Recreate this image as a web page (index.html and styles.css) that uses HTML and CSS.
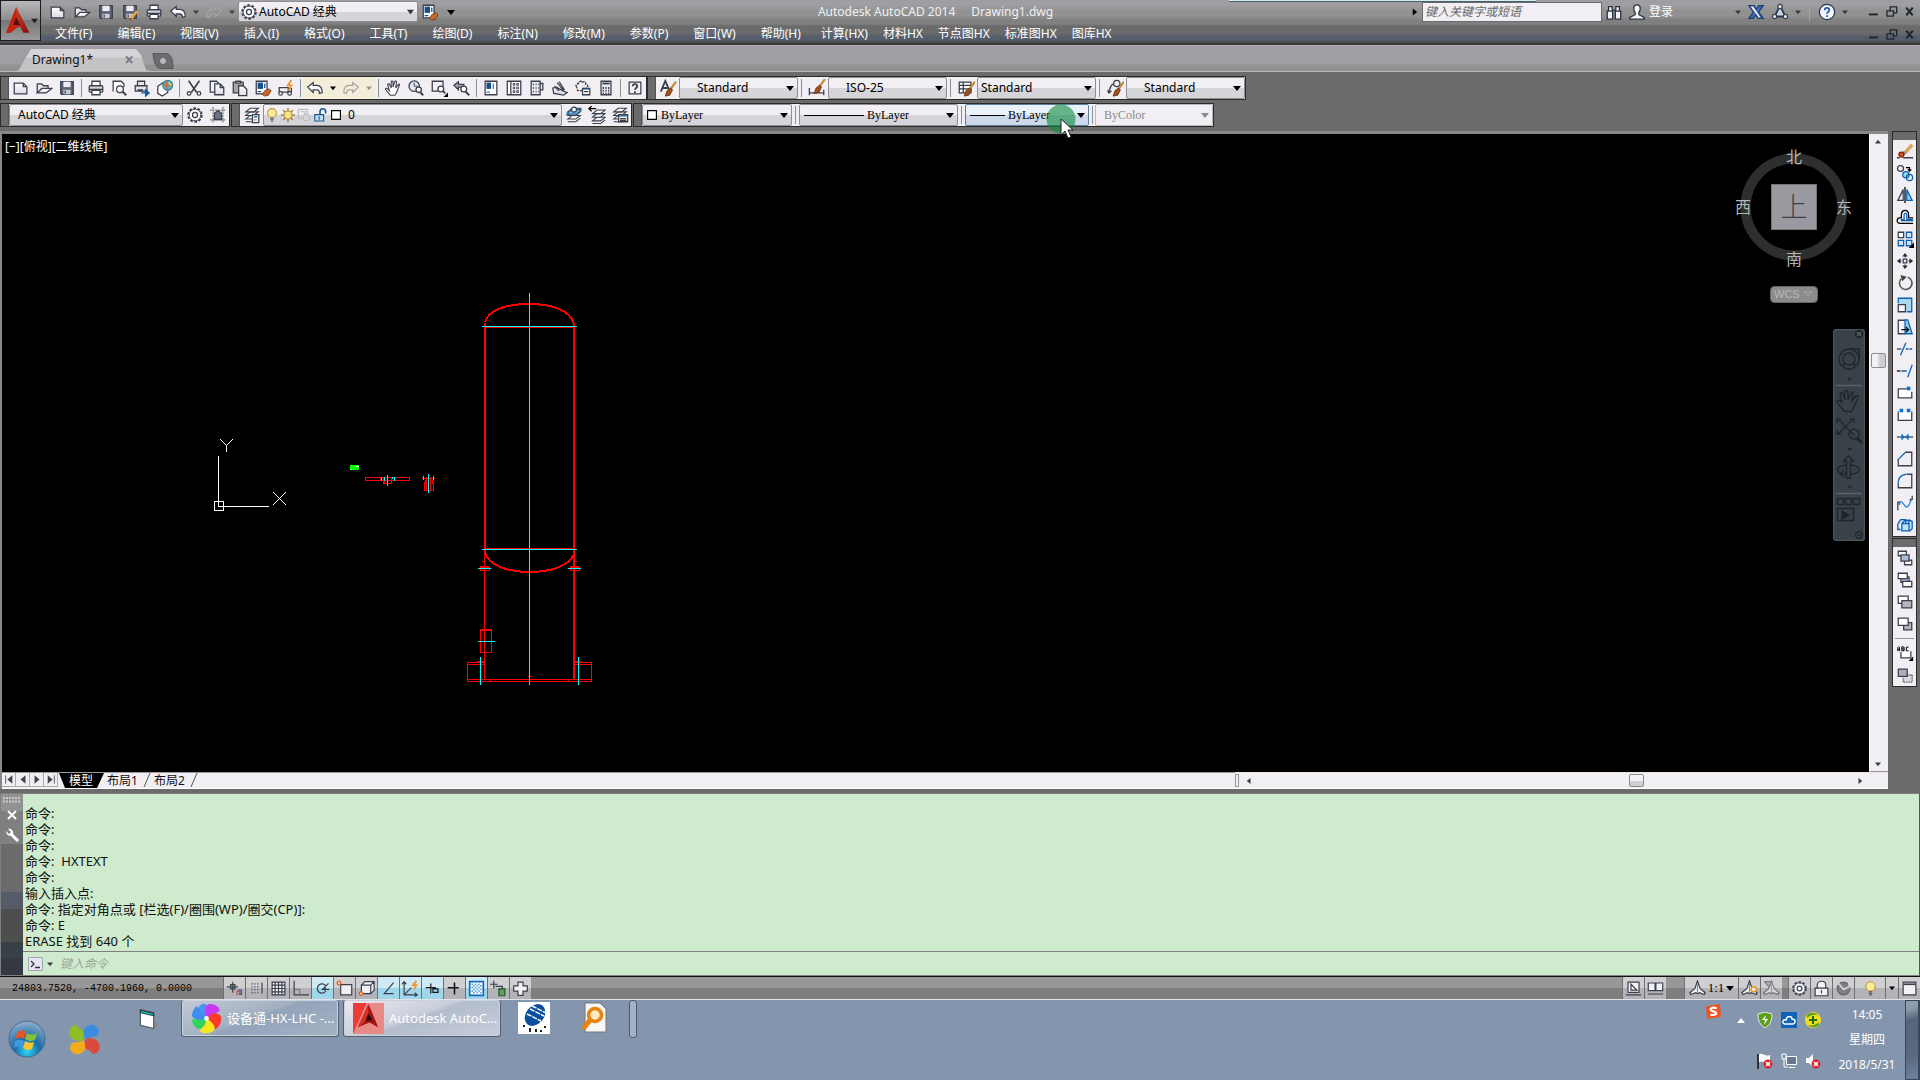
FILE: index.html
```
<!DOCTYPE html>
<html lang="zh-CN">
<head>
<meta charset="utf-8">
<title>Autodesk AutoCAD 2014 - Drawing1.dwg</title>
<link rel="stylesheet" href="styles.css">
</head>
<body>
<svg class="sprite" aria-hidden="true">
  <defs>
    <linearGradient id="gPage" x1="0" y1="0" x2="0" y2="1"><stop offset="0" stop-color="#fff"/><stop offset="1" stop-color="#dcdbe4"/></linearGradient>
    <linearGradient id="gRed" x1="0" y1="0" x2="1" y2="1"><stop offset="0" stop-color="#e8513a"/><stop offset="1" stop-color="#8c0f08"/></linearGradient>
    <radialGradient id="gOrb" cx=".5" cy=".85" r=".9"><stop offset="0" stop-color="#2fd8f4"/><stop offset=".4" stop-color="#1b6aa6"/><stop offset="1" stop-color="#9fb9d2"/></radialGradient>
  </defs>
  <symbol id="brush" viewBox="0 0 20 20"><path d="M19 3l-6 8" stroke="#c98a35" stroke-width="2.400"/><path d="M13 10l2 2-3 6-5 1 2-6z" fill="#a3521d" stroke="#6b3210" stroke-width="1"/></symbol>
  <symbol id="new" viewBox="0 0 20 20"><path d="M2.500 4.500h10l4 4v8h-14zM12.500 4.500v4h4" fill="url(#gPage)"/></symbol>
  <symbol id="open" viewBox="0 0 20 20"><path d="M2.500 15.500v-10h5l2 2h5v3" fill="#e8e8ee"/><path d="M2.500 15.500l5-5h11l-6 5z" fill="url(#gPage)"/></symbol>
  <symbol id="save" viewBox="0 0 20 20"><path d="M3 3h14v14H4l-1-1z" fill="#5b6474"/><path d="M6 3h8v6H6z" fill="#ececf2" stroke="none"/><path d="M6 12h8v5H6z" fill="#c9ccd6" stroke="none"/><path d="M8 13v3"/></symbol>
  <symbol id="saveas" viewBox="0 0 20 20"><use href="#save"/><path d="M18 9l-7 8" stroke="#e6a23c" stroke-width="3"/><path d="M11 17l-1 2" stroke="#b32"/></symbol>
  <symbol id="print" viewBox="0 0 20 20"><path d="M5.500 8V2.500h9V8" fill="#fff"/><rect x="2.500" y="7.500" width="15" height="7" rx="1" fill="#d5d4dc"/><path d="M2.500 11.500h15"/><path d="M5.500 12.500h9v5h-9z" fill="#fff"/></symbol>
  <symbol id="preview" viewBox="0 0 20 20"><path d="M3.500 14V2.500h9l3 3V9" fill="#fff"/><circle cx="11" cy="11.500" r="3.800" fill="#f3f5f9"/><path d="M14 14l4 4" stroke-width="2.200"/></symbol>
  <symbol id="publish" viewBox="0 0 20 20"><path d="M5 7V2.500h8V7M2.500 7.500h13v6h-13zM5 12h6" fill="#e4e3ea"/><path d="M9 15.500h6M14 12l4 3.500-4 3.500z" fill="#0d5ea8" stroke="#0d5ea8"/></symbol>
  <symbol id="web" viewBox="0 0 20 20"><path d="M2 8l6-4 5 3v8l-6 4-5-3z" fill="#fff"/><circle cx="13" cy="7" r="5.500" fill="#49b4d4" stroke="#4b7f8e"/><path d="M9 7h8M13 2c-2 3-2 7 0 10" stroke="#e25b2c"/><path d="M14 4l3 3" stroke="#f2d43c" stroke-width="2"/></symbol>
  <symbol id="cut" viewBox="0 0 20 20"><path d="M4 2l9 13M16 2L7 15" stroke-width="1.800"/><circle cx="4.500" cy="16" r="2"/><circle cx="15.500" cy="16" r="2"/></symbol>
  <symbol id="copy" viewBox="0 0 20 20"><path d="M2.500 2.500h7l2 2v10h-9z" fill="#f3f3f7"/><path d="M7.500 5.500h6l4 4v8h-10zM13.500 5.500v4h4" fill="url(#gPage)"/></symbol>
  <symbol id="paste" viewBox="0 0 20 20"><path d="M2.500 3.500h11v12h-11z" fill="#a9a6a8"/><path d="M5.500 4.500v-2h5v2z" fill="#fff"/><path d="M8.500 7.500h5l4 4v7h-9z" fill="url(#gPage)"/></symbol>
  <symbol id="match" viewBox="0 0 20 20"><path d="M2.500 2.500h12v14h-12z" fill="#fff"/><path d="M4 4h6v7H4z" fill="#15528c" stroke="none"/><path d="M12 5v5M4 14h4" stroke="#15528c"/><path d="M12 13l5-2 2 2-3 5-4 1-3-2z" fill="#c56a2c" stroke="#7c3b14" stroke-width="1"/></symbol>
  <symbol id="block" viewBox="0 0 20 20"><path d="M2.500 9.500h10v5h-10zM12 14h4v-4" fill="#f4f4f8"/><circle cx="4" cy="16" r="2" fill="#fff"/><circle cx="14" cy="16" r="2" fill="#fff"/><path d="M16 1l-4 6h4l-3 6" stroke="#f0932b" stroke-width="2"/></symbol>
  <symbol id="undo" viewBox="0 0 20 20"><path d="M2 9l6-5v3h4c4 0 6 3 6 8l-3 1c0-3-1-4-3-4H8v3z" fill="#fbfbfd"/></symbol>
  <symbol id="redo" viewBox="0 0 20 20"><path d="M18 9l-6-5v3H8c-4 0-6 3-6 8l3 1c0-3 1-4 3-4h4v3z" fill="none" stroke="#a5a5a4"/></symbol>
  <symbol id="pan" viewBox="0 0 20 20"><path d="M7 18l-5-6c-1-2 1-2 2-1l2 2L4 6c0-1 2-1 2 0l2 4V3c0-1 2-1 2 0v6l2-6c0-1 2-1 2 0l-1 7 3-4c1-1 2 0 1 1l-3 8-2 3z" fill="#fff" stroke-width="1.200"/></symbol>
  <symbol id="zoomrt" viewBox="0 0 20 20"><circle cx="8" cy="8" r="5.800" fill="#dfe6ee"/><path d="M8 4v4h4" stroke-width="1"/><circle cx="13" cy="12" r="3" fill="#fff"/><path d="M15 15l3 3" stroke-width="2.200"/></symbol>
  <symbol id="zoomwin" viewBox="0 0 20 20"><path d="M10 13.500H2.500v-11h12V9"/><circle cx="12" cy="11" r="3.200" fill="#fff"/><path d="M14 13l3 3" stroke-width="2"/><path d="M20 15v5h-5z" fill="#000" stroke="none"/></symbol>
  <symbol id="zoomprev" viewBox="0 0 20 20"><path d="M1 7l5-4v3h6v3H6v3z" fill="#a8a8ae"/><circle cx="12" cy="11" r="3.200" fill="#fff"/><path d="M14 14l4 4" stroke-width="2.200"/></symbol>
  <symbol id="props" viewBox="0 0 20 20"><path d="M3.500 2.500h13v15h-13z" fill="#fff"/><path d="M5 4h5v7H5z" fill="#174f85" stroke="none"/><path d="M12.500 5v6M5 14.500h4" stroke="#4a78a8"/></symbol>
  <symbol id="dc" viewBox="0 0 20 20"><path d="M2.500 2.500h15v15h-15zM6.500 2.500v15" fill="#fff"/><path d="M9 5h2v2H9zM13 5h2v2h-2zM9 9h2v2H9zM13 9h2v2h-2zM9 13h2v2H9zM13 13h2v2h-2z" stroke-width="1"/></symbol>
  <symbol id="palette" viewBox="0 0 20 20"><path d="M3.500 2.500h10v15h-10zM13.500 5h3v7h-3" fill="#e9e9ef"/><path d="M6 5v11M9 5v11M12 5v11" stroke-dasharray="2 2" stroke-width="1"/></symbol>
  <symbol id="sheet" viewBox="0 0 20 20"><path d="M2 10l4-1 9 5 3 1-4 3-11-2zM4 8l5 5M7 4l7 9M9 3l6 9" fill="#dfe0e8"/></symbol>
  <symbol id="markup" viewBox="0 0 20 20"><path d="M3 9c-2-2 0-4 2-4 0-3 4-3 4-1 2-2 5-1 4 2 3 0 3 3 1 4v3H4z" stroke-dasharray="3 1"/><path d="M9.500 10.500h8v7h-8zM11 14h5" fill="#fff"/><path d="M10 11h7" stroke="#15528c"/></symbol>
  <symbol id="calc" viewBox="0 0 20 20"><path d="M4.500 2.500h11v15h-11z" fill="#e9e9ef"/><path d="M6 5h8" stroke-width="2"/><path d="M7 9v8M10 9v8M13 9v8" stroke-dasharray="2 1"/></symbol>
  <symbol id="q" viewBox="0 0 20 20"><rect x="3.500" y="3.500" width="13" height="13" fill="#f2f2f6"/><path d="M7.500 8c0-3 5-3 5 0 0 2-2.500 2-2.500 4M10 13.500v2" stroke-width="2"/></symbol>
  <symbol id="txt" viewBox="0 0 20 20"><path d="M2 14L7 2l5 12M4 10h6" stroke-width="2"/><use href="#brush"/></symbol>
  <symbol id="dim" viewBox="0 0 20 20"><path d="M1.500 10v8M17.500 12v6M2 15.500h15"/><use href="#brush" y="-3"/></symbol>
  <symbol id="tbl" viewBox="0 0 20 20"><path d="M2.500 3.500h13v12h-13zM3 7h12M3 11h12M7 4v11" fill="#fff"/><use href="#brush" x="1"/></symbol>
  <symbol id="ldr" viewBox="0 0 20 20"><circle cx="12" cy="5" r="3.500"/><path d="M9 5c-4 1-5 6-6 11l-1-4M3 16l3-3"/><use href="#brush" x="1"/></symbol>
  <symbol id="gear" viewBox="0 0 20 20"><circle cx="10" cy="10" r="7.600" stroke-dasharray="3 1.800" stroke-width="2"/><circle cx="10" cy="10" r="6.500" fill="#fafafc" stroke-width="1"/><circle cx="10" cy="10" r="2.800"/></symbol>
  <symbol id="wsset" viewBox="0 0 20 20"><path d="M1 4.500h18M1 15.500h18M4.500 1v18M15.500 1v18" stroke-dasharray="2 1" stroke="#777"/><path d="M6 15V8l4-3 4 3v7z" fill="#6d7480"/></symbol>
  <symbol id="lay" viewBox="0 0 20 20"><path d="M3 14.500l5-4h9l-5 4zM3 17.500h9l5-4" fill="#f5f5f9" stroke-width="1.200"/><path d="M3 10.500l5-4h9l-5 4z" fill="#f5f5f9" stroke-width="1.200"/><path d="M3 6.500l5-4h9l-5 4z" fill="#f5f5f9" stroke-width="1.200"/></symbol>
  <symbol id="layset" viewBox="0 0 20 20"><use href="#lay"/><path d="M10.500 9.500h7v9h-7z" fill="#fff"/><path d="M12 11h4v2h-4z" fill="#3b87c2" stroke="none"/><path d="M12 15.500h4" stroke-dasharray="1 1"/></symbol>
  <symbol id="laycur" viewBox="0 0 20 20"><use href="#lay"/><path d="M7 4h11l-5 5H2z" fill="#86bfe6" stroke="#24669c"/><circle cx="10" cy="4" r="2.800" fill="#fff"/></symbol>
  <symbol id="layprev" viewBox="0 0 20 20"><use href="#lay" x="2" y="2"/><path d="M1 3h8M4 0L1 3l3 3" stroke="#000"/></symbol>
  <symbol id="laystate" viewBox="0 0 20 20"><use href="#lay"/><path d="M8.500 9.500h10v8h-10zM10 14h7M10 16h7" fill="#fff"/><path d="M9 11h9" stroke="#15528c"/></symbol>
  <symbol id="bulb" viewBox="0 0 20 20"><circle cx="10" cy="7.500" r="5.500" fill="#fbeb9a" stroke="#c4a043"/><path d="M8 14h4M8 16h4M9 18h2" stroke="#555"/></symbol>
  <symbol id="sun" viewBox="0 0 20 20"><path d="M10 1v18M1 10h18M4 4l12 12M16 4L4 16" stroke="#8a6d2b"/><circle cx="10" cy="10" r="5" fill="#fbe58a" stroke="#b78f2b"/></symbol>
  <symbol id="vp" viewBox="0 0 20 20"><g stroke="#b9b9bf"><path d="M3 3h11v6M3 3v11h5M6 6h5v3"/><circle cx="13" cy="13" r="4" fill="#d6d6da"/></g></symbol>
  <symbol id="lock" viewBox="0 0 20 20"><path d="M10 9V6c0-5 7-5 7 0v2" stroke="#1a568e" stroke-width="2"/><path d="M3.500 9.500h11v8h-11z" fill="#bfe0f2" stroke="#1a568e"/><path d="M9 12v4" stroke="#1a568e"/></symbol>
  <symbol id="box" viewBox="0 0 20 20"><path d="M4.500 4.500h11v11h-11z" fill="#fff" stroke="#000"/></symbol>
  <symbol id="bino" viewBox="0 0 20 20"><path d="M4 4h4v5H4zM12 4h4v5h-4zM2.500 9h6v9h-6zM11.500 9h6v9h-6zM9 8h2" fill="#f1f1f5" stroke="#25303c"/></symbol>
  <symbol id="person" viewBox="0 0 20 20"><path d="M10 2c5 0 4 6 2 9v2l6 3v2H2v-2l6-3v-2C6 8 5 2 10 2z" fill="#f4f4f7" stroke="#25303c"/></symbol>
  <symbol id="xch" viewBox="0 0 20 20"><path d="M2 3h6l2 4 3-4h5l-5 7 5 7h-6l-2-4-3 4H2l5-7z" fill="#3f69b8" stroke="#233b6c"/><path d="M4 4h3l8 12h-2z" fill="#e8eef8" stroke="none"/></symbol>
  <symbol id="a360" viewBox="0 0 20 20"><path d="M10 3l6 12H4z" fill="#cdd4e2" stroke="#26374e" stroke-width="2"/><circle cx="10" cy="4" r="2.400" fill="#eef"/><circle cx="4" cy="15" r="2.400" fill="#eef"/><circle cx="16" cy="15" r="2.400" fill="#eef"/></symbol>
  <symbol id="help" viewBox="0 0 20 20"><circle cx="10" cy="10" r="8.500" fill="#f4f6fb" stroke="#26374e"/><path d="M7.500 8c0-3.500 5-3.500 5 0 0 2-2.500 2-2.500 4M10 13.500v2" stroke="#2a55ad" stroke-width="2"/></symbol>
  <symbol id="min" viewBox="0 0 20 20"><path d="M3 14.500h14" stroke="#1f2830" stroke-width="3"/></symbol>
  <symbol id="rest" viewBox="0 0 20 20"><path d="M8 8V3h10v9h-5M3 9h10v8H3z" stroke="#1f2830" stroke-width="2"/></symbol>
  <symbol id="close" viewBox="0 0 20 20"><path d="M5 4l10 12M15 4L5 16" stroke="#1f2830" stroke-width="3.400"/></symbol>
  <symbol id="dn" viewBox="0 0 8 8"><path d="M0 2h8L4 7z" fill="currentColor" stroke="none"/></symbol>
  <symbol id="up" viewBox="0 0 8 8"><path d="M0 6h8L4 1z" fill="currentColor" stroke="none"/></symbol>
  <symbol id="rt" viewBox="0 0 8 8"><path d="M2 0v8l5-4z" fill="currentColor" stroke="none"/></symbol>
  <symbol id="lt" viewBox="0 0 8 8"><path d="M6 0v8L1 4z" fill="currentColor" stroke="none"/></symbol>
  <symbol id="m1" viewBox="0 0 20 20"><path d="M18 3l-8 9" stroke="#d9a860" stroke-width="4"/><path d="M10 11l-4 4" stroke="#8c8c9c" stroke-width="4"/><circle cx="6" cy="14" r="2.800" fill="#e2501f" stroke="#7a2408"/><path d="M1 17.500h3M8 17.500h11"/></symbol>
  <symbol id="m2" viewBox="0 0 20 20"><circle cx="5" cy="5" r="3.300"/><path d="M11 4h4v4M13 6l2 2 2-2" stroke="#000"/><circle cx="11" cy="12" r="3.500" fill="#9cdcf5" stroke="#0b5fb5"/><circle cx="15" cy="15" r="3.500" stroke="#0b5fb5"/></symbol>
  <symbol id="m3" viewBox="0 0 20 20"><path d="M8 4v12H2z"/><path d="M10 1v18" stroke="#000"/><path d="M12 4v12h6z" fill="#9ad6f1" stroke="#0b5fb5"/></symbol>
  <symbol id="m4" viewBox="0 0 20 20"><path d="M19 17H4c-4 0-3-6 0-6h2V8c0-7 8-7 8 0v3h5" stroke="#000"/><path d="M19 14H6v-1h3V8c0-3 3-3 3 0v5h7" stroke="#0b5fb5"/></symbol>
  <symbol id="m5" viewBox="0 0 20 20"><path d="M2.500 2.500h6v6h-6z" fill="#fff"/><path d="M11.500 2.500h6v6h-6zM2.500 11.500h6v6h-6zM11.500 11.500h6v6h-6z" fill="#cfe3f3" stroke="#0b5fb5"/><path d="M20 14v6h-6z" fill="#000" stroke="none"/></symbol>
  <symbol id="m6" viewBox="0 0 20 20"><path d="M8 8h4v4H8z"/><path d="M10 1l3 4H7zM10 19l3-4H7zM1 10l4-3v6zM19 10l-4-3v6z" fill="#23272e" stroke="none"/><path d="M10 4v2M10 14v2M4 10h2M14 10h2"/></symbol>
  <symbol id="m7" viewBox="0 0 20 20"><path d="M6 5a7 7 0 1 0 7-1.500" stroke="#555" stroke-width="1.700"/><path d="M5 1l7 2-5 5z" fill="#444" stroke="none"/></symbol>
  <symbol id="m8" viewBox="0 0 20 20"><path d="M2.500 8V2.500h15v15H12" fill="#abd9ee" stroke="#0b5fb5"/><path d="M2.500 9.500h8v8h-8z" fill="#f6f6fa"/></symbol>
  <symbol id="m9" viewBox="0 0 20 20"><path d="M10 2.500H2.500v15H10" fill="#f6f6fa"/><path d="M10 2h3l5 15.500h-8z" fill="#8fd0ec" stroke="#0b5fb5"/><path d="M6 13h8M11 10l3 3-3 3" stroke="#000"/></symbol>
  <symbol id="m10" viewBox="0 0 20 20"><path d="M1 10h5"/><path d="M11 3L5 17" stroke="#0b5fb5"/><path d="M11 10h8" stroke="#0b5fb5" stroke-dasharray="3 1"/></symbol>
  <symbol id="m11" viewBox="0 0 20 20"><path d="M1 10h4" stroke="#000"/><path d="M6 10h6M18 3l-5 14" stroke="#0b5fb5"/></symbol>
  <symbol id="m12" viewBox="0 0 20 20"><path d="M12 5.500H2.500v10h15v-7" fill="#fff"/><path d="M12 3h4v4h-4z" fill="#0b6fd0" stroke="none"/></symbol>
  <symbol id="m13" viewBox="0 0 20 20"><path d="M2.500 6v10h15V6" fill="#fff"/><path d="M4 3h4v4H4zM12 3h4v4h-4z" fill="#0b6fd0" stroke="none"/></symbol>
  <symbol id="m14" viewBox="0 0 20 20"><path d="M1 10h18"/><path d="M6 6l4 4-4 4zM14 6l-4 4 4 4z" fill="#0b6fd0" stroke="none"/></symbol>
  <symbol id="m15" viewBox="0 0 20 20"><path d="M2.500 10v7.500h15v-15H10" fill="#f2eef3"/><path d="M2 11l8-8" stroke="#0b5fb5"/></symbol>
  <symbol id="m16" viewBox="0 0 20 20"><path d="M2.500 12v5.500h15v-15H12" fill="#f2eef3"/><path d="M2.500 12c0-6 4-9 9-9.500" stroke="#0b5fb5"/></symbol>
  <symbol id="m17" viewBox="0 0 20 20"><path d="M2 18V9h2v3M16 8V6h2V2"/><path d="M3 11c4-8 6 6 10 3 2-1 2-4 4-7" stroke="#2c80d8"/></symbol>
  <symbol id="m18" viewBox="0 0 20 20"><path d="M2 9l3-5h6v4M14 4l4 2v8l-3 3M2 9v6h3M6.500 8.500h8v8h-8zM7 8l3-3h5l-1 3" fill="#bfe3f5" stroke="#0b5fb5"/></symbol>
  <symbol id="o1" viewBox="0 0 20 20"><path d="M2.500 2.500h9v5h-9zM9.500 12.500h8v5h-8z" fill="#fff"/><path d="M5.500 6.500h9v7h-9z" fill="#a9b9d0"/></symbol>
  <symbol id="o2" viewBox="0 0 20 20"><path d="M5.500 6.500h9v6h-9z" fill="#a9b9d0"/><path d="M2.500 2.500h10v6h-10zM7.500 11.500h10v6h-10z" fill="#fff"/></symbol>
  <symbol id="o3" viewBox="0 0 20 20"><path d="M2.500 3.500h11v8h-11z" fill="#fff"/><path d="M6.500 8.500h11v8h-11z" fill="#b6b6ba"/></symbol>
  <symbol id="o4" viewBox="0 0 20 20"><path d="M8.500 8.500h9v8h-9z" fill="#b6b6ba"/><path d="M2.500 3.500h11v8h-11z" fill="#fff"/></symbol>
  <symbol id="o5" viewBox="0 0 20 20"><path d="M5.500 9v6.500h11V8" fill="#fff"/><path d="M2 8V4l1-1 1 1v4M2 6h2M6.500 3v4.500H9V3.500zM6.500 5.500H9M14 3.500h-2.500v4H14" stroke="#000" stroke-width="1.100"/><path d="M19 14v5h-5z" fill="#000" stroke="none"/></symbol>
  <symbol id="o6" viewBox="0 0 20 20"><path d="M8 10h10v8H8z" stroke-dasharray="1 1" fill="#dadade"/><path d="M2.500 3.500h10v8h-10z" fill="#a9b1c0"/></symbol>
  <symbol id="s1" viewBox="0 0 20 20"><path d="M1 8h13M8 2v13M5.500 5.500h5v5h-5z"/><path d="M13 18v-5h3v3h2v-4" stroke="#e0422a"/><path d="M14 12h4v5h-3" stroke="#1b65b5"/></symbol>
  <symbol id="s2" viewBox="0 0 20 20"><path d="M4 4.500h9M4 8h9M4 11.500h9M4 15h9" stroke-dasharray="1.400 2"/><path d="M16.500 3v13"/></symbol>
  <symbol id="s3" viewBox="0 0 20 20"><path d="M2.500 2.500h15v15h-15zM6 2v15M10 2v15M14 2v15M2 6h15M2 10h15M2 14h15" fill="#f4f4f6"/></symbol>
  <symbol id="s4" viewBox="0 0 20 20"><path d="M2.500 1v16.500H20"/><path d="M3 11h6v6" stroke="#777"/></symbol>
  <symbol id="s5" viewBox="0 0 20 20"><path d="M14 7a5.500 5.500 0 1 0 0 6M9 11h9M10 11l7-7M13 8v5"/></symbol>
  <symbol id="s6" viewBox="0 0 20 20"><path d="M5.500 5.500h13v12h-13z" fill="#f0eff3"/><circle cx="3.500" cy="3.500" r="2" fill="#fff" stroke="#e8622a" stroke-width="1.800"/></symbol>
  <symbol id="s7" viewBox="0 0 20 20"><path d="M4 6l4-4h11v10l-4 4H4zM4 6h11v10M15 6l4-4" fill="#f0f0f5"/><circle cx="3.500" cy="16" r="2" fill="#fff" stroke="#e8622a" stroke-width="1.800"/></symbol>
  <symbol id="s8" viewBox="0 0 20 20"><path d="M16 3L5 16h11"/></symbol>
  <symbol id="s9" viewBox="0 0 20 20"><path d="M2.500 3v14.500H18M3 17l8-8M0 5l2.500-3L5 5M15 15l3 2.500-3 2"/><path d="M17 1l-4 5h4l-3 5" stroke="#f0932b" stroke-width="2"/></symbol>
  <symbol id="s10" viewBox="0 0 20 20"><path d="M2 9h12M8 4v12M10.500 10.500h6v4h-6z" stroke="#16191e"/></symbol>
  <symbol id="s11" viewBox="0 0 20 20"><path d="M2 9h13M10 3v14" stroke="#111" stroke-width="1.800"/></symbol>
  <symbol id="s12" viewBox="0 0 20 20"><path d="M2 2h16v16H2z" fill="#fff" stroke="#1669b8" stroke-width="2"/><path d="M4 5h12M4 9h12M4 13h12" stroke="#5fa9de" stroke-width="2" stroke-dasharray="2 2"/><path d="M6 7h10M6 11h10M6 15h10" stroke="#5fa9de" stroke-width="2" stroke-dasharray="2 2"/></symbol>
  <symbol id="s13" viewBox="0 0 20 20"><path d="M0 5h9M4.500 1v9M6.500 7.500h8v8"/><path d="M10.500 10.500h7v8h-7z" fill="#5ea05c" stroke="#20542a"/></symbol>
  <symbol id="s14" viewBox="0 0 20 20"><path d="M7 2.500h6V7h5v6h-5v5H7v-5H2V7h5z" fill="#f1f1f4"/></symbol>
  <symbol id="t1" viewBox="0 0 20 20"><path d="M3.500 2.500h13v12h-13zM1 17.500h18" fill="#f2f2f5"/><path d="M7 5v7h7z"/></symbol>
  <symbol id="t2" viewBox="0 0 20 20"><path d="M1.500 3.500h8v9h-8zM10.500 3.500h8v9h-8zM1 16.500h18" fill="#f2f2f5"/></symbol>
  <symbol id="t3" viewBox="0 0 20 20"><path d="M10 1l3 9 6 5-1 2-6-2-2 1-2-1-6 2-1-2 6-5z" fill="#f2f2f5"/><path d="M10 4v10" stroke="#888"/></symbol>
  <symbol id="t4" viewBox="0 0 20 20"><use href="#t3"/><circle cx="15" cy="11" r="3" fill="#fff" stroke="#e89b2a" stroke-width="2"/></symbol>
  <symbol id="t5" viewBox="0 0 20 20"><g opacity=".55"><use href="#t3"/><path d="M2 2h8L7 8z" fill="#999"/></g></symbol>
  <symbol id="t6" viewBox="0 0 20 20"><path d="M5 9V6c0-6 10-6 10 0v3M2.500 9.500h15v9h-15zM10 12v4" fill="#f2f2f5"/></symbol>
  <symbol id="t7" viewBox="0 0 20 20"><circle cx="10" cy="10" r="7.500" fill="#7c7f86" stroke="#66686e"/><path d="M4 4l6 7 7-3-1-5" stroke="#d4d4d8" stroke-width="2"/></symbol>
  <symbol id="t8" viewBox="0 0 20 20"><path d="M2.500 2.500h15v15h-15z" fill="#f2f2f5"/><path d="M3 5h14" stroke-width="2"/></symbol>
  <symbol id="alogo" viewBox="0 0 36 38"><path d="M17 1L4 34h6l7-6 5-2 4 8h8z" fill="url(#gRed)" stroke="none"/><path d="M17 1l1 26-8 7H4z" fill="#c3240f" stroke="none"/><path d="M17 14l-4 10h9z" fill="#54100a" stroke="none"/></symbol>
</svg>

<header class="top">
  <span class="peek"></span>
  <button class="app" aria-label="应用程序菜单"><svg class="logo"><use href="#alogo"/></svg><svg class="ar"><use href="#dn"/></svg></button>
  <div class="rows">
    <div class="titlerow">
      <div class="qat">
        <button aria-label="新建"><svg><use href="#new"/></svg></button><button aria-label="打开"><svg><use href="#open"/></svg></button><button aria-label="保存"><svg><use href="#save"/></svg></button><button aria-label="另存为"><svg><use href="#saveas"/></svg></button><button aria-label="打印"><svg><use href="#print"/></svg></button><button aria-label="放弃"><svg><use href="#undo"/></svg></button><button class="tiny" aria-label="放弃列表"><svg><use href="#dn"/></svg></button><button aria-label="重做"><svg><use href="#redo"/></svg></button><button class="tiny" aria-label="重做列表"><svg><use href="#dn"/></svg></button>
        <span class="combo qws"><svg class="lead"><use href="#gear"/></svg><select aria-label="工作空间"><option>AutoCAD 经典</option></select><svg class="ar"><use href="#dn"/></svg></span>
        <button aria-label="特性匹配"><svg><use href="#match"/></svg></button><button class="tiny dark" aria-label="自定义"><svg><use href="#dn"/></svg></button>
      </div>
      <div class="titles"><span>Autodesk AutoCAD 2014</span><span>Drawing1.dwg</span></div>
      <div class="info">
        <svg class="a8"><use href="#rt"/></svg>
        <input type="text" placeholder="键入关键字或短语" aria-label="搜索">
        <button aria-label="搜索帮助"><svg><use href="#bino"/></svg></button>
        <a class="login" href="#"><svg><use href="#person"/></svg>登录</a>
        <svg class="a6"><use href="#dn"/></svg>
        <button aria-label="Exchange"><svg><use href="#xch"/></svg></button>
        <button aria-label="A360"><svg><use href="#a360"/></svg></button>
        <svg class="a6"><use href="#dn"/></svg><i class="vsep"></i>
        <button aria-label="帮助"><svg><use href="#help"/></svg></button>
        <svg class="a6"><use href="#dn"/></svg>
        <span class="win"><button aria-label="最小化"><svg><use href="#min"/></svg></button><button aria-label="还原"><svg><use href="#rest"/></svg></button><button aria-label="关闭"><svg><use href="#close"/></svg></button></span>
      </div>
    </div>
    <nav class="menurow">
      <a href="#" class="w">文件(F)</a><a href="#" class="w">编辑(E)</a><a href="#" class="w">视图(V)</a><a href="#" class="w">插入(I)</a><a href="#" class="w">格式(O)</a><a href="#" class="w">工具(T)</a><a href="#" class="w">绘图(D)</a><a href="#" class="w">标注(N)</a><a href="#" class="w">修改(M)</a><a href="#" class="w">参数(P)</a><a href="#" class="w">窗口(W)</a><a href="#" class="w">帮助(H)</a><a href="#">计算(HX)</a><a href="#">材料HX</a><a href="#">节点图HX</a><a href="#">标准图HX</a><a href="#">图库HX</a>
      <span class="win"><button aria-label="最小化图形"><svg><use href="#min"/></svg></button><button aria-label="还原图形"><svg><use href="#rest"/></svg></button><button aria-label="关闭图形"><svg><use href="#close"/></svg></button></span>
    </nav>
  </div>
</header>

<div class="filetabs">
  <button class="ftab">Drawing1*<b>×</b></button>
  <button class="addtab" aria-label="新图形"><svg viewBox="0 0 22 16"><path d="M1 .5h13c4 0 7 4 7 15H9C4 15.500 2 10 1 .500z" fill="#6c6c6e" stroke="#58585a"/><path d="M8 8h6M11 5v6" stroke="#b9b9bc" stroke-width="3"/></svg></button>
</div>

<div class="bars">
  <div class="barrow">
    <div class="bar"><i class="grip"></i><button aria-label="新建"><svg><use href="#new"/></svg></button><button aria-label="打开"><svg><use href="#open"/></svg></button><button aria-label="保存"><svg><use href="#save"/></svg></button><i class="sep"></i><button aria-label="打印"><svg><use href="#print"/></svg></button><button aria-label="预览"><svg><use href="#preview"/></svg></button><button aria-label="发布"><svg><use href="#publish"/></svg></button><button aria-label="三维打印"><svg><use href="#web"/></svg></button><i class="sep"></i><button aria-label="剪切"><svg><use href="#cut"/></svg></button><button aria-label="复制"><svg><use href="#copy"/></svg></button><button aria-label="粘贴"><svg><use href="#paste"/></svg></button><button aria-label="特性匹配"><svg><use href="#match"/></svg></button><button aria-label="块编辑器"><svg><use href="#block"/></svg></button><i class="sep"></i><button class="hl" aria-label="放弃"><svg><use href="#undo"/></svg></button><button class="tiny hl dark" aria-label="放弃列表"><svg><use href="#dn"/></svg></button><button class="hl" aria-label="重做"><svg><use href="#redo"/></svg></button><button class="tiny hl grey" aria-label="重做列表"><svg><use href="#dn"/></svg></button><i class="sep"></i><button aria-label="平移"><svg><use href="#pan"/></svg></button><button aria-label="实时缩放"><svg><use href="#zoomrt"/></svg></button><button aria-label="窗口缩放"><svg><use href="#zoomwin"/></svg></button><button aria-label="缩放上一个"><svg><use href="#zoomprev"/></svg></button><i class="sep"></i><button aria-label="特性"><svg><use href="#props"/></svg></button><button aria-label="设计中心"><svg><use href="#dc"/></svg></button><button aria-label="工具选项板"><svg><use href="#palette"/></svg></button><button aria-label="图纸集"><svg><use href="#sheet"/></svg></button><button aria-label="标记集"><svg><use href="#markup"/></svg></button><button aria-label="计算器"><svg><use href="#calc"/></svg></button><i class="sep"></i><button aria-label="帮助"><svg><use href="#q"/></svg></button></div>
    <div class="bar"><i class="grip"></i><button aria-label="文字样式"><svg><use href="#txt"/></svg></button><span class="combo std ind"><select aria-label="文字样式"><option>Standard</option></select><svg class="ar"><use href="#dn"/></svg></span><i class="sep w7"></i><button aria-label="标注样式"><svg><use href="#dim"/></svg></button><span class="combo std ind"><select aria-label="标注样式"><option>ISO-25</option></select><svg class="ar"><use href="#dn"/></svg></span><i class="sep w7"></i><button aria-label="表格样式"><svg><use href="#tbl"/></svg></button><span class="combo std"><select aria-label="表格样式"><option>Standard</option></select><svg class="ar"><use href="#dn"/></svg></span><i class="sep w7"></i><button aria-label="多重引线样式"><svg><use href="#ldr"/></svg></button><span class="combo std ind"><select aria-label="引线样式"><option>Standard</option></select><svg class="ar"><use href="#dn"/></svg></span></div>
  </div>
  <div class="barrow gapped">
    <div class="bar"><i class="grip"></i><span class="combo ws"><select aria-label="工作空间"><option>AutoCAD 经典</option></select><svg class="ar"><use href="#dn"/></svg></span><button aria-label="工作空间设置"><svg><use href="#gear"/></svg></button><button aria-label="我的工作空间"><svg><use href="#wsset"/></svg></button></div>
    <div class="bar"><i class="grip"></i><button aria-label="图层特性"><svg><use href="#layset"/></svg></button><span class="combo layer"><span class="lead"><svg><use href="#bulb"/></svg><svg><use href="#sun"/></svg><svg><use href="#vp"/></svg><svg><use href="#lock"/></svg><svg><use href="#box"/></svg></span><select aria-label="图层"><option>0</option></select><svg class="ar"><use href="#dn"/></svg></span><button aria-label="置为当前"><svg><use href="#laycur"/></svg></button><button aria-label="上一个图层"><svg><use href="#layprev"/></svg></button><button aria-label="图层状态"><svg><use href="#laystate"/></svg></button></div>
    <div class="bar by"><i class="grip"></i><span class="combo color"><svg class="lead"><use href="#box"/></svg><select aria-label="颜色"><option>ByLayer</option></select><svg class="ar"><use href="#dn"/></svg></span><i class="sep w7"></i><span class="combo ltype"><i class="lead"></i><select aria-label="线型"><option>ByLayer</option></select><svg class="ar"><use href="#dn"/></svg></span><i class="sep w7"></i><span class="combo lwt"><i class="lead"></i><select aria-label="线宽"><option>ByLayer</option></select><svg class="ar"><use href="#dn"/></svg><svg class="pointer" viewBox="0 0 30 36"><circle cx="15" cy="15" r="14.500" fill="#0c8a3a" fill-opacity=".6"/><path d="M15 15v16l4-4 3 7 3-1-3-7h5z" fill="#fff" stroke="#222"/></svg></span><i class="sep"></i><span class="combo pstyle"><select aria-label="打印样式" disabled><option>ByColor</option></select><svg class="ar"><use href="#dn"/></svg></span></div>
  </div>
</div>

<main class="work">
  <section class="docwin">
    <div class="view">
      <span class="vlabel">[−][俯视][二维线框]</span>
      <svg class="drawing" viewBox="2 134 700 637" shape-rendering="crispEdges" fill="none">
        <g stroke="#fff">
          <path d="M218.500 456v50.500H269M214.500 501.500h9v9h-9zM220 439l6.500 6.500 6.500-6.500M226.500 445v7M273 492l13 13M286 492l-13 13"/>
        </g>
        <g stroke="#f00">
          <path d="M365.500 477.500h44v3h-44zM380.500 477v4M383.500 478v5h8M384.500 477.500h7v6h-7zM394 478v3"/>
          <path d="M422 478.500h13M424.500 482v8.500h9V482M426.500 477v13M430.500 477v13M425 480v4M432 480v4"/>
          <path stroke-width="2" d="M485 323v231M574 324v355M485 322c4-13 23-18 44-18s41 5 45 20M485 553c4 12 22 19 44 19s40-6 45-18"/>
          <path d="M485 327.500h89M484.500 554v125M574 548.500h-89M480 567h9v3h-9zM570 567h9v3h-9zM482 561.500h3M574 561.500h3"/>
          <path stroke-width="2" d="M480 630h12M480 567h9M570 567h9M477 662h7M575 662h7"/>
          <path d="M480.500 629.500h11v23h-11zM484 662.500h-16.500v19h124v-19H575M468 664.500h16M575 664.500h16M467 679.500h125M490.500 679v2M568.500 679v2M528 676.500h4"/>
        </g>
        <g stroke="#0ff">
          <path d="M529.500 293v392M482 326.500h95M482 549.500h95M478 568.500h13M568 568.500h13M478 641.500h17M480.500 657v28M578.500 657v28M387.500 475v11M428.500 474v19M381.500 477v4M384.500 477v4M392.500 477v2M394.500 477v4M423.500 476v4M433.500 476v4"/>
        </g>
        <path fill="#0f0" d="M350 465h9v5h-9z"/><path fill="#fff" d="M356 466h3v1h-3zM351 469h1v1h-1zM353 469h1v1h-1z"/>
      </svg>
      <svg class="cube" viewBox="1732 146 126 160">
        <circle cx="1794" cy="207" r="48.500" fill="none" stroke="#2d2f2f" stroke-width="10"/>
        <path d="M1771.500 184.500h45v45h-45z" fill="#9a999f" stroke="#777"/>
        <g fill="#b4b4b4" font-size="16" text-anchor="middle"><text x="1794" y="163">北</text><text x="1794" y="265">南</text><text x="1743" y="213">西</text><text x="1844" y="213">东</text></g>
        <text class="face" x="1794" y="217" text-anchor="middle">上</text>
        <rect x="1770.500" y="286.500" width="47" height="16" rx="4" fill="#8c8c8c" stroke="#666"/>
        <text class="wcs" x="1774" y="298">WCS</text><path d="M1804 292h8l-4 4z" fill="none" stroke="#a8a8a8"/>
      </svg>
      <svg class="navbar" viewBox="0 0 32 212" fill="none" stroke="#20262b" stroke-width="1.400">
        <rect x=".5" y=".5" width="31" height="211" rx="3" fill="#394249" stroke="#4b545b"/>
        <circle cx="26" cy="5" r="3.500" fill="#20262b"/><path d="M24 3l4 4M28 3l-4 4" stroke="#566"/>
        <circle cx="16" cy="30" r="10"/><circle cx="16" cy="30" r="6"/><path d="M16 20h10v10M9 37l3-3M20 34l3 3"/>
        <path d="M14 49h5l-2.500 3zM14 119h5l-2.500 3zM14 157h5l-2.500 3z" fill="#20262b" stroke="none"/>
        <path d="M3 56.500h26M3 164.500h26" stroke="#59636a"/>
        <path d="M11 82l-7-9c0-3 3-2 5 1L7 65c0-2 2-2 3 0l2 6V63c0-2 3-2 3 0v8l3-7c1-2 3-1 2 1l-1 7 4-5c2-1 3 0 2 2l-5 11-2 3z"/>
        <path d="M5 90l16 16M20 90L5 105M4 94v-4h4M17 90h4v4M4 101v4h4"/><circle cx="21" cy="105" r="5"/><path d="M24 109l5 5" stroke-width="3"/>
        <path d="M13.500 149v-17h-3l5-5 5 5h-3v17zM13 136c-11 1-11 9 0 9M18 136c11 1 11 8 0 9M11 141l-4 4 4 3"/>
        <path d="M4.500 169.500h6v6h-6zM12.500 169.500h6v6h-6zM20.500 169.500h6v6h-6zM4.500 179.500h16v12h-16z"/><path d="M9 182v8l7-4z" fill="#20262b"/>
        <circle cx="26" cy="206" r="3.500"/><path d="M24 206h4"/>
      </svg>
    </div>
    <div class="vscroll"><svg class="a6"><use href="#up"/></svg><i class="before"></i><i class="thumb"></i><i class="after"></i><svg class="a6"><use href="#dn"/></svg></div>
    <div class="foot">
      <div class="ltabs">
        <span class="lnav"><button aria-label="第一个"><svg viewBox="0 0 12 10"><path d="M2 0v10" stroke="#444"/><path d="M10 0v10L4 5z" fill="#444"/></svg></button><button aria-label="上一个"><svg viewBox="0 0 12 10"><path d="M9 0v10L3 5z" fill="#444"/></svg></button><button aria-label="下一个"><svg viewBox="0 0 12 10"><path d="M3 0v10l6-5z" fill="#444"/></svg></button><button aria-label="最后一个"><svg viewBox="0 0 12 10"><path d="M10 0v10" stroke="#444"/><path d="M2 0v10l6-5z" fill="#444"/></svg></button></span>
        <button class="ltab on">模型</button><button class="ltab">布局1</button><svg class="slash" viewBox="0 0 8 14"><path d="M7 0L1 14" stroke="#555"/></svg><button class="ltab">布局2</button><svg class="slash" viewBox="0 0 8 14"><path d="M7 0L1 14" stroke="#555"/></svg>
      </div>
      <div class="hscroll"><i class="split"></i><svg class="a6"><use href="#lt"/></svg><i class="before"></i><i class="thumb"></i><i class="after"></i><svg class="a6"><use href="#rt"/></svg></div>
    </div>
  </section>
  <aside class="side">
    <div class="vbar"><i class="vgrip"></i><button aria-label="删除"><svg><use href="#m1"/></svg></button><button aria-label="复制"><svg><use href="#m2"/></svg></button><button aria-label="镜像"><svg><use href="#m3"/></svg></button><button aria-label="偏移"><svg><use href="#m4"/></svg></button><button aria-label="阵列"><svg><use href="#m5"/></svg></button><button aria-label="移动"><svg><use href="#m6"/></svg></button><button aria-label="旋转"><svg><use href="#m7"/></svg></button><button aria-label="缩放"><svg><use href="#m8"/></svg></button><button aria-label="拉伸"><svg><use href="#m9"/></svg></button><button aria-label="修剪"><svg><use href="#m10"/></svg></button><button aria-label="延伸"><svg><use href="#m11"/></svg></button><button aria-label="打断于点"><svg><use href="#m12"/></svg></button><button aria-label="打断"><svg><use href="#m13"/></svg></button><button aria-label="合并"><svg><use href="#m14"/></svg></button><button aria-label="倒角"><svg><use href="#m15"/></svg></button><button aria-label="圆角"><svg><use href="#m16"/></svg></button><button aria-label="光顺曲线"><svg><use href="#m17"/></svg></button><button aria-label="分解"><svg><use href="#m18"/></svg></button></div>
    <div class="vbar"><i class="vgrip"></i><button aria-label="前置"><svg><use href="#o1"/></svg></button><button aria-label="后置"><svg><use href="#o2"/></svg></button><button aria-label="置于对象之上"><svg><use href="#o3"/></svg></button><button aria-label="置于对象之下"><svg><use href="#o4"/></svg></button><i class="hsep"></i><button aria-label="注释前置"><svg><use href="#o5"/></svg></button><button aria-label="图案填充后置"><svg><use href="#o6"/></svg></button></div>
  </aside>
</main>

<section class="cmd">
  <div class="cmdside">
    <svg viewBox="0 0 18 6"><path d="M0 1h18M0 4.500h18" stroke="#c9c9cc" stroke-width="2" stroke-dasharray="2 1"/></svg>
    <button aria-label="关闭命令行"><svg viewBox="0 0 10 10"><path d="M1 1l8 8M9 1L1 9" stroke="#fff" stroke-width="2"/></svg></button>
    <button aria-label="自定义命令行"><svg viewBox="0 0 16 16"><path d="M7 7l7 7" stroke="#fff" stroke-width="3"/><path d="M2 4l3 3 2-2-3-3c3-1 6 2 5 5-2 3-7 2-7-3z" fill="#fff"/></svg></button>
  </div>
  <div class="cmdmain">
    <div class="log"><p>命令:</p><p>命令:</p><p>命令:</p><p>命令:  HXTEXT</p><p>命令:</p><p>输入插入点:</p><p>命令: 指定对角点或 [栏选(F)/圈围(WP)/圈交(CP)]:</p><p>命令: E</p><p>ERASE 找到 640 个</p></div>
    <div class="prompt"><svg class="pic" viewBox="0 0 15 14"><path d="M.5 .5h14v13H.5z" fill="#e6e6f2" stroke="#a3a3b8"/><path d="M3 4l3 3-3 3M7 10.500h5" fill="none" stroke="#333" stroke-width="1.300"/></svg><svg class="a6"><use href="#dn"/></svg><input type="text" placeholder="键入命令" aria-label="命令"></div>
  </div>
</section>

<footer class="status">
  <output class="coords">24803.7520, -4700.1960, 0.0000</output>
  <div class="sbs"><button aria-label="推断约束"><svg><use href="#s1"/></svg></button><button aria-label="捕捉"><svg><use href="#s2"/></svg></button><button aria-label="栅格"><svg><use href="#s3"/></svg></button><button aria-label="正交"><svg><use href="#s4"/></svg></button><button class="on" aria-label="极轴"><svg><use href="#s5"/></svg></button><button aria-label="对象捕捉"><svg><use href="#s6"/></svg></button><button aria-label="三维对象捕捉"><svg><use href="#s7"/></svg></button><button class="on" aria-label="对象追踪"><svg><use href="#s8"/></svg></button><button class="on" aria-label="动态UCS"><svg><use href="#s9"/></svg></button><button class="on" aria-label="动态输入"><svg><use href="#s10"/></svg></button><button aria-label="线宽"><svg><use href="#s11"/></svg></button><button class="on" aria-label="透明度"><svg><use href="#s12"/></svg></button><button aria-label="快捷特性"><svg><use href="#s13"/></svg></button><button aria-label="选择循环"><svg><use href="#s14"/></svg></button></div>
  <div class="sbs end"><button aria-label="模型"><svg><use href="#t1"/></svg></button><button aria-label="快速查看"><svg><use href="#t2"/></svg></button><i class="g18"></i><button class="scale"><svg><use href="#t3"/></svg>1:1<svg class="a8"><use href="#dn"/></svg></button><button aria-label="注释可见性"><svg><use href="#t4"/></svg></button><button aria-label="自动添加比例"><svg><use href="#t5"/></svg></button><i class="g6"></i><button aria-label="切换工作空间"><svg><use href="#gear"/></svg></button><button aria-label="锁定"><svg><use href="#t6"/></svg></button><button aria-label="硬件加速"><svg><use href="#t7"/></svg></button><button class="iso" aria-label="隔离对象"><svg><use href="#bulb"/></svg></button><button class="tiny dark" aria-label="状态栏菜单"><svg><use href="#dn"/></svg></button><button aria-label="全屏显示"><svg><use href="#t8"/></svg></button></div>
</footer>

<footer class="taskbar">
  <button class="orb" aria-label="开始"><svg viewBox="0 0 38 38"><circle cx="19" cy="19" r="18" fill="url(#gOrb)" stroke="#44698f"/><path d="M9 13c3-3 6-3 9-1l-2 7c-3-2-6-2-9 0z" fill="#e5562a"/><path d="M19 13c3 2 6 2 10 0l-2 7c-4 2-7 1-10-1z" fill="#86bf3c"/><path d="M7 21c3-2 6-2 9 0l-2 7c-3-2-5-2-8 0z" fill="#3f9be0"/><path d="M17 21c3 2 6 2 9 1l-2 7c-3 2-6 1-9-1z" fill="#f7c52e"/></svg></button>
  <button class="clover" aria-label="安全浏览器"><svg viewBox="0 0 32 32"><path d="M15 16C12 18 4 18 1 12-1 7 2 1 7 1c3 3 3 4 7 5 2 3 2 7 1 10z" fill="#8fbe24"/><path d="M17 15c-3-4-3-10 2-13 5-3 11 0 12 5 0 3-1 4-3 6-5-1-7 2-11 2z" fill="#3b8be0"/><path d="M15 17c3 4 3 10-2 13-5 3-11 0-12-5 0-3 1-4 3-6 5 1 7-2 11-2z" fill="#f0ac1c"/><path d="M17 16c3-2 11-2 14 4 2 5-1 11-6 11-3-3-3-4-7-5-2-3-2-7-1-10z" fill="#da4a3c"/></svg></button>
  <button class="wnd" aria-label="程序"><svg viewBox="0 0 24 28"><path d="M18 16l6 5-6 5z" fill="#888"/><path d="M1 2l17 4v20L1 22z" fill="#fff" stroke="#222"/><path d="M1 3l17 4v3L1 6z" fill="#12c8c8" stroke="#111"/></svg></button>
  <button class="task one"><svg viewBox="0 0 32 32"><path d="M16 16C6 14 4 4 12 1c5-1 8 5 4 15z" fill="#4b92f5"/><path d="M16 16C12 7 15 1 20 1c6 0 9 4 10 7z" fill="#c93af2"/><path d="M16 16c6-8 13-6 15-2 1 7-3 11-6 13z" fill="#fa3b2a"/><path d="M16 16c8 5 10 10 7 13-4 3-11 3-14 0z" fill="#f8e71c"/><path d="M16 16c-1 9-6 12-10 10-3-2-5-5-5-9z" fill="#2fd35d"/><path d="M16 16C6 19 2 16 1 13c0-5 3-8 5-10z" fill="#3f8df2"/><circle cx="16" cy="16" r="2.500" fill="#fff"/></svg>设备通-HX-LHC -...</button>
  <button class="task two"><svg viewBox="0 0 32 32"><path d="M0 0h32v32H0z" fill="#e88a88"/><path d="M0 0h14L0 32z" fill="#ee3a38"/><path d="M16 1L5 25l10-4 2-1 9 5z" fill="#a3150e"/><path d="M16 1v9l-4 10-7 5z" fill="#d9301f"/><path d="M16 11l-3 7h7z" fill="#2a0a08"/></svg>Autodesk AutoC...</button>
  <button class="egg" aria-label="工具"><svg viewBox="0 0 32 32"><path d="M0 0h32v32H0z" fill="#fff"/><ellipse cx="17" cy="13" rx="9" ry="12" transform="rotate(40 17 13)" fill="#0a4ea2"/><path d="M14 4l14 7M12 7l14 7M9 12l14 7" stroke="#fff" stroke-width="1.400" stroke-dasharray="5 1"/><path d="M5 23h2v2H5zM11 26h2v4h-2zM17 27h2v3h-2zM26 24h2v2h-2zM22 28h2v2h-2z" fill="#222"/></svg></button>
  <button class="find" aria-label="搜索"><svg viewBox="0 0 28 32"><path d="M4 1h15l6 6v23H4z" fill="#f6f6f6" stroke="#777"/><circle cx="14" cy="13" r="6.500" fill="#ffe9c9" stroke="#e8830c" stroke-width="3.500"/><path d="M9 18l-7 9" stroke="#e8830c" stroke-width="5"/></svg></button>
  <i class="tsplit"></i>
  <div class="tray">
    <svg class="sogou" viewBox="0 0 16 16"><path d="M1 3l13-2 1 12-13 2z" fill="#f4511e"/><path d="M11 5c-7-2-7 2-3 3s4 4-3 3" fill="none" stroke="#fff" stroke-width="2"/></svg>
    <svg class="a8"><use href="#up"/></svg>
    <div class="icons">
      <svg viewBox="0 0 16 16"><path d="M8 0l7 2c0 7-2 11-7 14C3 13 1 9 1 2z" fill="#5a9e1c" stroke="#eee"/><path d="M9 3L5 8h3l-1 5 4-6H8z" fill="#fff"/></svg>
      <svg viewBox="0 0 16 16"><path d="M0 0h16v16H0z" fill="#0f62b8"/><path d="M4 12c-4-1-2-5 1-4 1-5 6-4 6-1 4 0 4 4 1 5z" fill="none" stroke="#fff" stroke-width="1.400"/></svg>
      <svg viewBox="0 0 16 16"><circle cx="8" cy="8" r="8" fill="#f2dc1c"/><path d="M2 3c3-3 8-3 11 0-4-1-8 0-11 3zM14 13c-3 3-8 3-11 0 4 1 8 0 11-3z" fill="#58a123"/><path d="M8 4v8M4 8h8" stroke="#1e6b1a" stroke-width="2"/></svg>
      <svg viewBox="0 0 16 16"><path d="M1 1v15" stroke="#333" stroke-width="2"/><path d="M2 1c5-1 5 3 11 1v7c-6 2-6-2-11 0z" fill="#fff"/><circle cx="11" cy="11" r="4.500" fill="#d8262c"/><path d="M9 9l4 4M13 9l-4 4" stroke="#fff" stroke-width="1.600"/></svg>
      <svg viewBox="0 0 16 16"><path d="M5.500 3.500h10v8h-10zM8 14.500h6" fill="#68788c" stroke="#fff"/><path d="M1 1h4v5H1zM3 6v8h4" fill="none" stroke="#fff"/></svg>
      <svg viewBox="0 0 16 16"><path d="M1 5h3l4-4v13l-4-4H1z" fill="#fff"/><circle cx="11" cy="11" r="4.500" fill="#d8262c"/><path d="M9 9l4 4M13 9l-4 4" stroke="#fff" stroke-width="1.600"/></svg>
    </div>
    <time class="clock"><span>14:05</span><span>星期四</span><span>2018/5/31</span></time>
    <button class="desk" aria-label="显示桌面"></button>
  </div>
</footer>
</body>
</html>
```
FILE: styles.css
```
* { box-sizing: border-box; }
body {
  margin: 0;
  min-height: 100vh;
  display: flex;
  flex-direction: column;
  background: #6b6b6b;
  color: #111;
  font: 12px/16px "Noto Sans", "Noto Sans CJK SC", sans-serif;
}
button, select, input { font: inherit; color: inherit; margin: 0; }
button { border: 0; padding: 0; background: none; display: flex; align-items: center; justify-content: center; flex: none; }
a { color: inherit; text-decoration: none; }
p { margin: 0; }
svg { display: block; flex: none; }
use { fill: none; stroke: #3a3f4c; stroke-width: 1.4; }
i { display: block; flex: none; font-style: normal; }
.sprite { position: absolute; width: 0; height: 0; }
.a8, .ar { width: 8px; height: 8px; }
.a6 { width: 6px; height: 6px; color: #3c3c40; }

/* title and menu */
.top {
  position: relative;
  display: flex;
  height: 45px;
  color: #fff;
  border-bottom: 2px solid #3a3a3a;
  background: linear-gradient(#9f9ea3 0 5px, #929292 11px 16px, #808080 20px 24px, #6b6b6b 26px 33px, #555c6b 37px 40px, #4b4e50 42px);
}
.peek { position: absolute; left: 64%; width: 16%; top: 0; height: 2px; background: #d6eef2; border-bottom: 1px solid #47606a; }
.app { width: 41px; height: 41px; border: 1px solid #1c1c1c; background: linear-gradient(#b8b7bb, #8c8c8e 50%, #77777a 50%, #9a9a9c); color: #222; }
.app .logo { width: 28px; height: 32px; }
.app .ar { width: 7px; height: 7px; }
.rows { flex: 1; display: flex; flex-direction: column; }
.titlerow { height: 24px; display: flex; align-items: center; justify-content: space-between; padding-left: 5px; }
.qat { display: flex; align-items: center; height: 20px; }
.qat button { width: 24px; }
.qat svg { width: 18px; height: 18px; }
.qat .tiny { width: 12px; color: #444; }
.qat .tiny svg, .tiny svg { width: 6px; height: 6px; }
.qat .tiny.dark { width: 18px; color: #000; }
.qat .tiny.dark svg { width: 8px; height: 8px; }
.titles { display: flex; gap: 16px; color: #f1f1f1; }
.info { display: flex; align-items: center; }
.info svg { width: 18px; height: 18px; }
.info .a8 { width: 7px; height: 8px; color: #000; margin-right: 4px; }
.info .a6 { width: 6px; height: 6px; }
.info input { width: 180px; height: 20px; border: 1px solid #6b6b6b; background: #f1eff3; padding: 0 2px; font-style: italic; margin-right: 3px; }
.info input::placeholder { color: #666; opacity: 1; }
.login { display: flex; gap: 3px; margin: 0 62px 0 5px; align-items: center; }
.info button + button, .info .a6 + button, .info button + .a6 { margin-left: 6px; }
.vsep { width: 1px; height: 18px; background: #a5a5a8; margin: 0 8px; }
.win { display: flex; gap: 1px; margin-left: 17px; padding-right: 2px; }
.info .win button { margin: 0; }
.win button { width: 17px; }
.win svg, .info .win svg { width: 13px; height: 13px; }
.menurow { display: flex; align-items: center; gap: 15px; padding: 2px 0 0 9px; height: 20px; }
.menurow .w { padding: 0 5px; }
.menurow .win { margin-left: auto; }

/* document tabs */
.filetabs { display: flex; align-items: flex-end; height: 27px; padding-left: 16px; background: linear-gradient(#9f9ea3 0 18px, #929292 19px); border-bottom: 1px solid #b9b9bb; border-top: 1px solid #b0b0b2; }
.ftab { width: 134px; height: 22px; justify-content: space-between; padding: 0 16px; color: #111; background: linear-gradient(#d6d3d9 0 8px, #c3c3c5 9px); clip-path: polygon(0 100%, 3px 95%, 10px 8px, 15px 0, 120px 0, 125px 6px, 130px 95%, 100% 100%); }
.ftab b { font-size: 17px; color: #7c7c80; }
.addtab { width: 26px; height: 20px; }
.addtab svg { width: 22px; height: 16px; }

/* toolbars */
.bars { padding: 4px 0; display: flex; flex-direction: column; gap: 3px; }
.barrow { display: flex; }
.barrow.gapped .bar + .bar { margin-left: 1px; }
.bar { display: flex; height: 24px; border: 1px solid #2b2b2b; background: #f1eff3; }
.bar > button { width: 23px; height: 22px; }
.bar > button svg { width: 18px; height: 18px; }
.bar > .tiny { width: 13px; }
.bar > .tiny svg { width: 6px; height: 6px; }
.dark { color: #000; }
.grey { color: #999; }
.bar > .hl { background: #f2eed9; }
.grip { width: 8px; background: #6b6b6b; border-right: 1px solid #555; }
.sep { width: 6px; background: linear-gradient(#8f8f92, #8f8f92) center / 1px 18px no-repeat; }
.w7 { width: 7px; }
.combo { position: relative; display: grid; grid-template: 1fr / 1fr; align-items: center; border: 1px solid #8f8f93; border-radius: 2px; background: linear-gradient(#f1eff3 0 50%, #d5d4d8 52%); color: #000; }
.combo > * { grid-area: 1 / 1; }
.combo select { appearance: none; width: 100%; height: 100%; border: 0; background: none; padding: 0 16px 0 8px; opacity: 1; outline: 0; }
.combo .ar { justify-self: end; margin-right: 3px; pointer-events: none; }
.combo .lead { pointer-events: none; }
.qws { width: 180px; height: 21px; }
.qat .qws .ar { width: 7px; height: 7px; color: #333; }
.qws select { padding-left: 20px; }
.qws .lead { margin-left: 1px; }
.std { width: 119px; }
.std select { padding-left: 3px; }
.std.ind select { padding-left: 17px; }
.ws { width: 174px; }
.layer { width: 299px; }
.layer .lead { display: flex; }
.layer .lead svg { width: 16px; height: 16px; }
.layer select { padding-left: 84px; }
.by { font-family: "Liberation Serif", serif; }
.color { width: 150px; }
.color .lead { width: 16px; height: 16px; margin-left: 1px; }
.color select { padding-left: 18px; }
.ltype { width: 159px; }
.ltype .lead { width: 60px; height: 1px; background: #000; margin-left: 4px; }
.ltype select { padding-left: 67px; }
.lwt { width: 124px; background: linear-gradient(#eaf1f8 0 50%, #ccd9ea 52%); border-color: #5d7f9e; }
.lwt .lead { width: 35px; height: 1px; background: #000; margin-left: 4px; }
.lwt select { padding-left: 42px; }
.pointer { position: absolute; left: 80px; top: -1px; width: 30px; height: 36px; z-index: 3; pointer-events: none; }
.pstyle { width: 118px; background: #f1eff3; color: #8a8a8c; border-color: #bbb; }

/* workspace */
.work { flex: 1; display: flex; gap: 4px; padding-right: 2px; }
.docwin { flex: 1; display: grid; grid-template: 1fr 17px / 1fr 19px; border: 1px solid #dcdcdf; border-width: 3px 0 0 2px; border-color: #888 #fff #fff #888; }
.view { position: relative; background: #000; min-height: 560px; overflow: hidden; }
.vlabel { position: absolute; left: 3px; top: 5px; color: #fff; }
.drawing { position: absolute; left: 0; top: 0; width: 700px; height: 637px; }
.cube { position: absolute; right: 11px; top: 12px; width: 126px; height: 160px; }
.face { font: 300 27px "Noto Sans CJK SC", sans-serif; fill: #3a434b; }
.wcs { font: 11px "Liberation Sans", sans-serif; fill: #b9b9bd; }
.navbar { position: absolute; right: 4px; top: 195px; width: 32px; height: 212px; }
.vscroll { display: flex; flex-direction: column; align-items: center; padding: 5px 2px 4px 0; background: #f1eff3; border-left: 1px solid #fff; border-bottom: 1px solid #999; }
.thumb { width: 15px; height: 15px; border: 1px solid #8d8d90; border-radius: 2px; background: linear-gradient(90deg, #f3f3f5 40%, #cfcfd2 60%); }
.vscroll .before { flex: 206; }
.vscroll .after { flex: 389; }
.foot { grid-column: 1 / 3; display: grid; grid-template-columns: 17fr 9fr; background: #f1eff3; border-bottom: 1px solid #fff; }
.ltabs { display: flex; align-items: flex-start; border-top: 1px solid #999; }
.lnav { display: flex; }
.lnav button { width: 14px; height: 14px; border: 1px solid #aaa; border-width: 0 1px 1px 0; }
.lnav svg { width: 10px; height: 9px; }
.ltab { height: 15px; padding: 0 5px 0 3px; }
.ltab.on { background: #000; color: #fff; padding: 0 11px 0 10px; margin-left: 1px; clip-path: polygon(0 0, 100% 0, calc(100% - 7px) 100%, 6px 100%); }
.slash { width: 8px; height: 14px; }
.hscroll { display: flex; align-items: center; padding: 0 25px 0 0; border-top: 1px solid #eddfe6; }
.split { width: 4px; height: 13px; border: 1px solid #999; margin-right: 7px; }
.hscroll .before { flex: 377; }
.hscroll .after { flex: 213; }
.hscroll .thumb { height: 13px; background: linear-gradient(#f3f3f5 50%, #cfcfd2 60%); }
.side { display: flex; flex-direction: column; gap: 1px; width: 26px; }
.vbar { border: 1px solid #2b2b2b; background: #f1eff3; width: 25px; display: flex; flex-direction: column; align-items: center; }
.vbar button { width: 22px; height: 22px; }
.vbar svg { width: 18px; height: 18px; }
.vgrip { width: 100%; height: 8px; background: #6b6b6b; }
.hsep { width: 19px; height: 1px; background: #999; margin: 3px 0; }

/* command line */
.cmd { display: flex; margin-top: 4px; border: 1px solid #808080; border-right: 1px solid #555; height: 183px; }
.cmdside { width: 22px; display: flex; flex-direction: column; align-items: center; gap: 7px; padding-top: 3px; background: linear-gradient(#929292 0 17px, #808080 17px 50px, #6b6b6b 50px 98px, #555b68 98px 115px, #4d4f4e 115px 148px, #394148 148px 164px, #343840 164px); }
.cmdside > svg { width: 18px; height: 6px; }
.cmdside button svg { width: 10px; height: 10px; }
.cmdside button + button svg { width: 16px; height: 16px; }
.cmdmain { flex: 1; display: flex; flex-direction: column; background: #ceebcd; }
.log { flex: 1; padding: 11px 2px 0; font-size: 13px; border-bottom: 1px solid #808080; }
.log p { white-space: pre; }
.prompt { display: flex; align-items: center; height: 23px; padding-left: 5px; gap: 4px; }
.prompt .pic { width: 15px; height: 14px; }
.prompt input { flex: 1; border: 0; background: none; padding: 0 3px; font-style: italic; outline: 0; }
.prompt input::placeholder { color: #9ba69b; opacity: 1; }

/* status bar */
.status { display: flex; height: 23px; border-top: 1px solid #111; background: linear-gradient(#989898 50%, #7e7e7e 52%); }
.coords { width: 223px; padding: 4px 0 0 12px; font-family: "Liberation Mono", monospace; font-size: 10px; color: #000; }
.sbs { display: flex; }
.sbs.end { margin-left: auto; }
.sbs button { width: 22px; border: 1px solid #6e6e70; border-width: 0 0 0 1px; background: linear-gradient(#d0d0d3 50%, #b4b4b8 52%); color: #000; }
.sbs button.on { background: linear-gradient(#cfeaf4 50%, #9fd6ea 52%); }
.sbs svg { width: 17px; height: 17px; }
.g18 { width: 18px; }
.g6 { width: 6px; }
.sbs .scale { width: 54px; gap: 2px; font-family: "Liberation Serif", serif; font-size: 13px; }
.sbs .a8 { width: 8px; height: 8px; }
.sbs .iso { width: 31px; }
.sbs .tiny { width: 13px; }
.sbs .tiny svg { width: 6px; height: 6px; }

/* taskbar */
.taskbar { display: flex; align-items: flex-start; height: 81px; background: #8495ae; color: #fff; border-top: 1px solid #dfe3ea; }
.taskbar > button { margin-right: 4px; }
.taskbar .orb { margin: 20px 0 0 8px; width: 38px; height: 38px; }
.orb svg { width: 38px; height: 38px; }
.taskbar .clover { margin: 24px 0 0 22px; width: 32px; }
.clover svg { width: 31px; height: 31px; }
.taskbar .wnd { margin: 8px 20px 0 37px; }
.wnd svg { width: 24px; height: 22px; }
.task { width: 158px; height: 37px; gap: 5px; font-size: 13px; justify-content: flex-start; padding-left: 9px; border: 1px solid #55606f; border-top: 0; border-radius: 3px; background: linear-gradient(160deg, #c3cad4, #a3b0c2 45%, #93a3b9 50%, #a5b3c5); box-shadow: inset 0 0 0 1px #c9d1dc; white-space: nowrap; overflow: hidden; }
.task svg { width: 31px; height: 31px; }
.task.two { background: linear-gradient(160deg, #ece8ef, #c9cedb 45%, #b3bccd 50%, #c6cedb); }
.taskbar .egg { margin: 2px 31px 0 13px; }
.egg svg { width: 32px; height: 32px; }
.taskbar .find { margin: 2px 20px 0 0; }
.find svg { width: 28px; height: 32px; }
.tsplit { width: 8px; height: 38px; border: 1px solid #4d5a6c; border-radius: 3px; background: #a5b2c4; }
.tray { display: flex; align-items: flex-start; margin-left: auto; align-self: stretch; }
.sogou { width: 17px; height: 17px; margin: 3px 15px 0 0; }
.tray .a8 { margin: 17px 12px 0 0; }
.icons { display: grid; grid-template-columns: repeat(3, 16px); gap: 25px 8px; padding-top: 12px; }
.icons svg { width: 16px; height: 16px; }
.clock { width: 76px; margin-left: 8px; display: flex; flex-direction: column; align-items: center; gap: 9px; padding-top: 7px; }
.desk { width: 15px; align-self: stretch; border: 1px solid #3b4758; border-right-width: 2px; background: linear-gradient(165deg, #8f9cab 10%, #56657a 25%, #5a6980 70%, #6b84a0); }
```
